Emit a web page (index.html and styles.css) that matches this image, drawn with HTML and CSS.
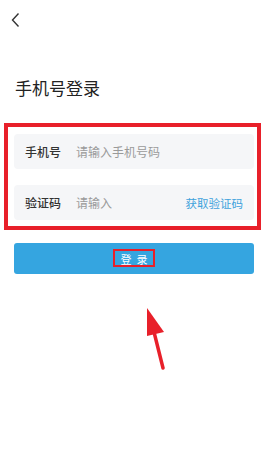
FILE: index.html
```html
<!DOCTYPE html>
<html lang="zh">
<head>
<meta charset="utf-8">
<link rel="stylesheet" href="styles.css">
</head>
<body>
<div class="page">
  <header class="topbar">
    <svg class="back" width="10" height="16" viewBox="0 0 10 16"><path d="M7.5 1.5 L1.5 8 L7.5 14.5" fill="none" stroke="#333" stroke-width="1.4"/></svg>
  </header>
  <h1 class="title">手机号登录</h1>
  <div class="form">
    <div class="field">
      <span class="label">手机号</span>
      <span class="placeholder">请输入手机号码</span>
    </div>
    <div class="field">
      <span class="label">验证码</span>
      <span class="placeholder">请输入</span>
      <span class="code-link">获取验证码</span>
    </div>
    <div class="btn"><span class="btn-text">登录</span></div>
  </div>
  <div class="mark mark-form"></div>
  <div class="mark mark-btn"></div>
  <svg class="arrow" width="30" height="70" viewBox="0 0 30 70"><polygon points="2,0 2,28 19,24" fill="#e8202a"/><line x1="9" y1="24" x2="18" y2="60" stroke="#e8202a" stroke-width="3.5" stroke-linecap="round"/></svg>
</div>
</body>
</html>
```

FILE: styles.css
```css
* { box-sizing: border-box; }
html, body { margin: 0; padding: 0; background: #fff; }
body { font-family: "Noto Sans CJK SC", "Noto Sans", sans-serif; color: #222; }
.page { position: relative; width: 270px; height: 465px; overflow: hidden; }
.topbar { height: 40px; padding: 12px 0 0 11px; }
.back { display: block; }
.title { margin: 36px 0 0 15px; font-size: 17px; font-weight: 400; line-height: 24px; color: #222; }
.form { margin-top: 34px; padding: 0 16px 0 14px; display: flex; flex-direction: column; }
.field { height: 35px; background: #f5f6f8; border-radius: 4px; display: flex; align-items: center; padding: 0 11px; font-size: 12px; }
.field + .field { margin-top: 16px; }
.label { width: 51px; color: #333; font-weight: 500; }
.placeholder { color: #9a9a9a; flex: 1; }
.code-link { color: #3ea2dc; font-size: 11.5px; }
.btn { margin-top: 23px; height: 31px; background: #35a5e0; border-radius: 3px; display: flex; align-items: center; justify-content: center; }
.btn-text { color: #fff; font-size: 11px; letter-spacing: 5px; margin-right: -5px; }
.mark { position: absolute; border: 4px solid #e8202a; }
.mark-form { left: 4px; top: 123px; width: 257px; height: 107px; }
.mark-btn { left: 113px; top: 249px; width: 42px; height: 18px; border-width: 2px; }
.arrow { position: absolute; left: 145px; top: 308px; }
```
